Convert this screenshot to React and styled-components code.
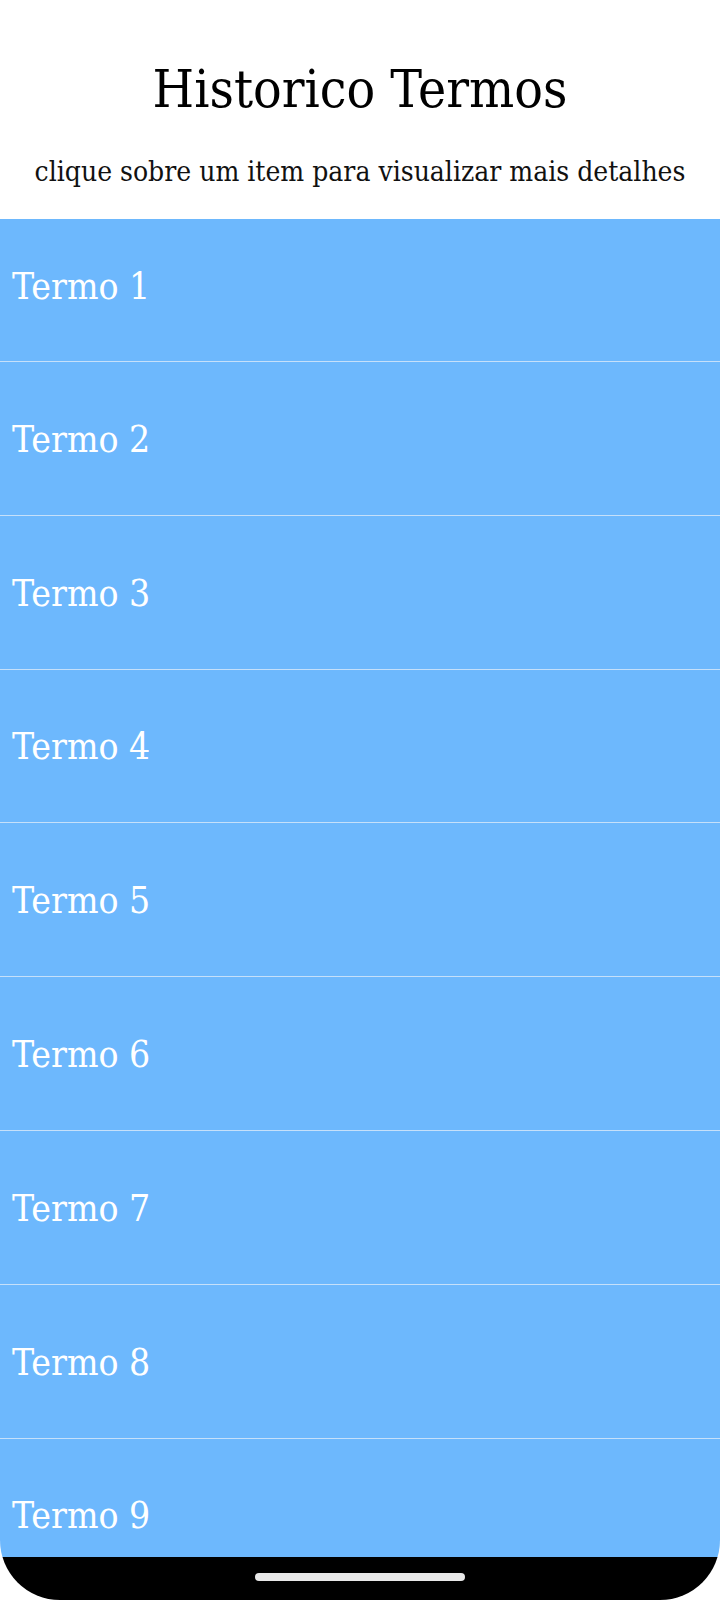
import React from 'react';
import styled, { createGlobalStyle } from 'styled-components';

const GlobalStyle = createGlobalStyle`
  html, body {
    margin: 0;
    padding: 0;
    background: white;
  }
`;

const Screen = styled.div`
  height: 1600px;
  display: flex;
  flex-direction: column;
  overflow: hidden;
  border-bottom-left-radius: 60px;
  border-bottom-right-radius: 60px;
  font-family: "DejaVu Serif", "Liberation Serif", serif;
  font-stretch: condensed;
`;

const Header = styled.div`
  height: 219px;
  flex-shrink: 0;
  display: flex;
  flex-direction: column;
  align-items: center;
  box-sizing: border-box;
  padding-top: 62px;
`;

const Title = styled.h1`
  margin: 0;
  font-size: 53px;
  font-weight: normal;
  color: #000;
  line-height: 1;
`;

const Subtitle = styled.p`
  margin: 43px 0 0;
  font-size: 28px;
  color: #111;
  line-height: 1;
`;

const List = styled.div`
  flex: 1;
  overflow: hidden;
  background: #6db8fd;
`;

const Row = styled.div`
  height: ${(p) => (p.first ? 142 : 152.8)}px;
  border-bottom: 1px solid #c5e0fa;
  display: flex;
  align-items: center;
  padding-left: 12px;
  color: white;
  font-size: 37px;
`;

const RowLabel = styled.span`
  position: relative;
  top: ${(p) => (p.first ? -4 : 1)}px;
`;

const NavBar = styled.div`
  height: 43px;
  flex-shrink: 0;
  background: #000;
  display: flex;
  justify-content: center;
  padding-top: 16px;
  box-sizing: border-box;
`;

const Pill = styled.div`
  width: 210px;
  height: 8px;
  border-radius: 4px;
  background: #e8e8e8;
`;

const items = [1, 2, 3, 4, 5, 6, 7, 8, 9];

export default function App() {
  return (
    <>
      <GlobalStyle />
      <Screen>
        <Header>
          <Title>Historico Termos</Title>
          <Subtitle>clique sobre um item para visualizar mais detalhes</Subtitle>
        </Header>
        <List>
          {items.map((n, i) => (
            <Row key={n} first={i === 0}>
              <RowLabel first={i === 0}>Termo {n}</RowLabel>
            </Row>
          ))}
        </List>
        <NavBar>
          <Pill />
        </NavBar>
      </Screen>
    </>
  );
}
